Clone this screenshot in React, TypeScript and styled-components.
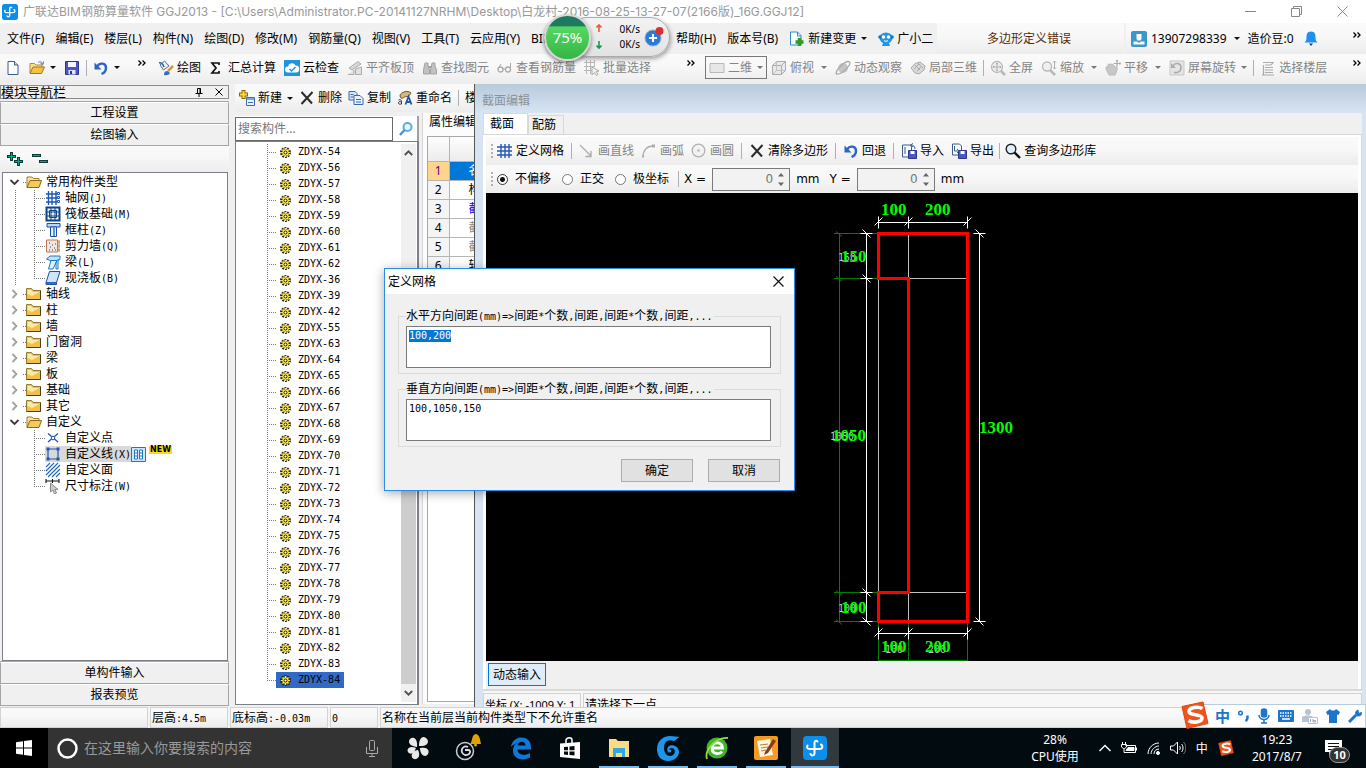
import React, { useEffect, useRef } from "react";
import styled, { createGlobalStyle, css } from "styled-components";

const UI = `"Noto Sans", "Noto Sans CJK SC", sans-serif`;

const GlobalStyle = createGlobalStyle`
  *, *::before, *::after { box-sizing: border-box; }
  body { margin: 0; background: #f0f0f0; font: 12px/16px ${UI}; color: #000; overflow: hidden; }
  button, input, textarea { font: inherit; color: inherit; }
  ul, ol { list-style: none; margin: 0; padding: 0; }
  svg { display: block; flex: none; }
`;

/* ---------- shared parts ---------- */

const Mono = styled.span`
  font: 10px/12px "DejaVu Sans Mono", monospace;
`;

function Sun({ children }: { children: string }) {
  return (
    <>
      {children.split(/([\x20-\x7e]+)/).map((part, i) =>
        /^[\x20-\x7e]+$/.test(part) ? <Mono key={i}>{part}</Mono> : part
      )}
    </>
  );
}

const Caret = styled.span<{ $dim?: boolean; $tight?: boolean }>`
  flex: none;
  margin-left: ${(p) => (p.$tight ? 2 : 4)}px;
  border: 3px solid transparent;
  border-top-color: ${(p) => (p.$dim ? "#777" : "#111")};
  border-bottom-width: 0;
`;

const Rule = styled.span<{ $snug?: boolean }>`
  flex: none;
  width: 1px;
  height: 16px;
  margin: 0 ${(p) => (p.$snug ? -2 : 0)}px;
  background: #b0b0b0;
`;

const More = () => (
  <svg width="8" height="6" viewBox="0 0 8 6" fill="none" stroke="#000" strokeWidth="1.3">
    <path d="M0.5 0.5 3 3 0.5 5.5M4.5 0.5 7 3 4.5 5.5" />
  </svg>
);

/* ---------- icons ---------- */

const S = ({ children, size = 16 }: { children: React.ReactNode; size?: number }) => (
  <svg width={size} height={size} viewBox="0 0 16 16" fill="none">
    {children}
  </svg>
);

const icons: Record<string, React.ReactNode> = {
  file: <S><path d="M3 1.500h6.500L13 5v9.500H3z" fill="#fdfeff" stroke="#3c5a8c" /><path d="M9.500 1.500V5H13" stroke="#3c5a8c" fill="#cfe0f4" /></S>,
  open: <S><path d="M1 13V3.500h4.500L7 5h6v2" fill="#fbe08e" stroke="#b98a22" /><path d="M1 13.500 4 7h11.500L12.500 13.500z" fill="#f3c04a" stroke="#a87714" /><path d="M9 2.500c2-1.500 4-.5 5 1.500M14.500 1.500 14 4.500l-2.500-1" stroke="#4e78b4" /></S>,
  save: <S><path d="M1.500 1.500h13v13h-13z" fill="#4a57c4" stroke="#2c3590" /><path d="M4 2h8v5H4z" fill="#f3f6ff" /><path d="M4.500 10h7v4.500h-7z" fill="#dfe4f5" /><path d="M6 11h2v3H6z" fill="#2c3590" /></S>,
  undo: <S><path d="M1.500 2.500v7h7z" fill="#2f63c5" /><path d="M4 6.500c3-4.500 9-3.500 9 1.500 0 3-2 5-4.500 6" stroke="#2f63c5" strokeWidth="2.400" /></S>,
  paint: <S><path d="M2 5 6.500 1 11 6 5.500 10z" fill="#e9eef5" stroke="#52719c" /><path d="M1 3c2-1 4 1 5 4" stroke="#3c5d91" strokeWidth="1.500" /><path d="M6 15c0-3 1-4 3.500-4L12 13c-1 2-3 2.500-6 2z" fill="#2f6ec4" /><path d="m10 11 5-5" stroke="#d59a22" strokeWidth="2.500" /></S>,
  sigma: <S><path d="M10 5V3H3l4 5-4 5h7v-2" stroke="#111" strokeWidth="1.700" /></S>,
  cloud: <S><path d="M0 0h16v16H0z" fill="#2294de" /><path d="M4 12.500a3 3 0 0 1 0-6 4 4 0 0 1 7.500-1 3.500 3.500 0 0 1 .5 7z" fill="#fff" /><path d="m5.500 9 2 2 4-4" stroke="#2294de" strokeWidth="1.500" /></S>,
  flush: <S><path d="M2 8 11 1.500 14 4 5 10z" fill="#d0d0d0" stroke="#999" /><path d="M1 14.500h6V10M8.500 9v5.500h6V7z" stroke="#999" fill="#ddd" /></S>,
  find: <S><path d="M3 3h3v3l1.500 4v4h-6v-4zM10 3h3v3l1.500 4v4h-6v-4z" fill="#b5b5b5" stroke="#909090" /><path d="M6 7h4" stroke="#909090" strokeWidth="2" /></S>,
  glasses: <S><circle cx="3.500" cy="9.500" r="2.500" stroke="#999" strokeWidth="1.300" /><circle cx="11" cy="9.500" r="2.500" stroke="#999" strokeWidth="1.300" /><path d="M6 9h2.500M1 9l3-5M13.500 9V3" stroke="#999" /></S>,
  batch: <S><path d="M0 2.500h11M0 6.500h11M0 10.500h8M2.500 0v14M6.500 0v14M10.500 0v7" stroke="#aaa" /><path d="m8 7 7 4-3 .5 2 3-1.500 1-2-3L8 15z" fill="#f4f4f4" stroke="#999" /></S>,
  flat: <S><path d="M1 3.500h14v9H1z" fill="#e4e4e4" stroke="#aaa" /></S>,
  cube: <S><path d="M1.500 5.500h9v9h-9zM1.500 5.500l4-4h9v9l-4 4M10.500 5.500l4-4" fill="#e6e6e6" stroke="#999" /><path d="M5.500 1.500v9h9M5.500 10.500l-4 4" stroke="#b5b5b5" /></S>,
  orbit: <S><circle cx="8" cy="8" r="5" fill="#b9b9b9" /><path d="M1.500 14C-.5 11 11-.5 14.500 2c2 2-7 13-13 12z" stroke="#999" strokeWidth="1.400" /></S>,
  local: <S><path d="M1 8 5 3.500l5-1.500 5 4-1 4-5 4-4-1z" fill="#d2d2d2" stroke="#999" /><path d="m4 9 5-5M7 11l5-5M5 5l5 5M8 3l5 5" stroke="#999" /></S>,
  full: <S><circle cx="7" cy="7" r="5.500" fill="#efefef" stroke="#aaa" strokeWidth="1.300" /><path d="M7 3v8M3 7h8M5.800 4.200 7 3l1.200 1.200M5.800 9.800 7 11l1.200-1.200M4.200 5.800 3 7l1.200 1.200M9.800 5.800 11 7 9.800 8.200" stroke="#999" /><path d="m11 11 4 4" stroke="#aaa" strokeWidth="2.500" /></S>,
  zoom: <S><circle cx="6" cy="6.500" r="4.500" fill="#efefef" stroke="#aaa" strokeWidth="1.300" /><path d="m9 10 5 5" stroke="#aaa" strokeWidth="2.500" /><path d="M13.500 1v8M12 2.500 13.500 1 15 2.500M12 7.500 13.500 9 15 7.500" stroke="#999" /></S>,
  pan: <S><path d="M1 9c0-3 1-3 2-1V5c0-1.500 1.500-1.500 2 0 0-1.500 1.800-1.500 2 0 .5-1 2-.5 2 1l1 1c2 0 3 1 2 3l-2 5H4z" fill="#bcbcbc" stroke="#aaa" /><path d="M12 0v7M8.500 3.500h7M11 1l1-1 1 1M14.500 2.500l1 1-1 1" stroke="#999" strokeWidth="1.200" /></S>,
  rotate: <S><path d="M1 1h14v14H1z" fill="#e2e2e2" stroke="#bbb" /><path d="M4 6c2-4 8-3 8 1.500S8 13 5 12.500" stroke="#999" strokeWidth="1.600" /><path d="M2 3v5h5z" fill="#999" /></S>,
  floors: <S><path d="M3 2.500h10L11 5H5M3.500 5v9.500M5 7.500h8M5 10h8M5 12.500h8M2 15h12" stroke="#999" strokeWidth="1.200" /></S>,
  addDoc: <S><path d="M1.500 1h7L12 4.500V14H1.500z" fill="#fff" stroke="#2d88d0" /><path d="M8.500 1v4H12" stroke="#2d88d0" /><path d="M10.500 7v8M6.500 11h8" stroke="#2f9a2a" strokeWidth="3.500" /></S>,
  robot: <S><ellipse cx="8" cy="7" rx="6.500" ry="5.500" fill="#2196e3" /><circle cx="2" cy="6" r="1.800" fill="#1378c4" /><circle cx="14" cy="6" r="1.800" fill="#1378c4" /><circle cx="5.500" cy="6" r="1.800" fill="#fff" /><circle cx="10.500" cy="6" r="1.800" fill="#fff" /><path d="M6 9.500c1 1 3 1 4 0" stroke="#fff" /><path d="M5 12h6l1 3H4z" fill="#2196e3" /></S>,
  user: <S><rect width="16" height="16" rx="2" fill="#3a97c9" /><path d="M5.500 3h5v5l-1 1.500h-3L5.500 8z" fill="#fff" /><path d="M2.500 10.500H6l2 1.500 2-1.500h3.500v3h-11z" fill="#fff" /></S>,
  bell: <S><path d="M8 .5c4 0 4.500 3 4.500 6s1 4 2 5h-13c1-1 2-2 2-5S4 .5 8 .5z" fill="#1f8ff0" /><path d="M6 12.500h4L8 15z" fill="#123a78" /></S>,
  add: <S><path d="M4.500 0v9M0 4.500h9" stroke="#8a6a00" strokeWidth="4" /><path d="M4.500 1v7M1 4.500h7" stroke="#ffd93b" strokeWidth="2" /><path d="M7.500 7.500h8v8h-8z" fill="#eaf3ff" stroke="#3b6bb5" /><path d="M8 8h7v2H8z" fill="#7ba6e0" /><path d="M9 12.500h5" stroke="#3b6bb5" /></S>,
  cross: <S><path d="M2.500 2 13 13.500M13.500 2 2.500 14" stroke="#2b2b2b" strokeWidth="2" /></S>,
  copy: <S><path d="M1 1.500h6l2 2V10H1z" fill="#d9e7fa" stroke="#3767b1" /><path d="M6 5.500h6l3 3V14.500H6z" fill="#eaf2fd" stroke="#3767b1" /><path d="M8 9.500h5M8 12h5M2.500 4.500h3M2.500 7h3" stroke="#3767b1" /></S>,
  rename: <S><path d="M3 6c0-4 8-6 11-3l-3 4C8 5 7 9 4 8z" fill="#d8b777" stroke="#6a5631" /><path d="M1.500 10c2-1 3 0 3 1.500V14c-2 .5-3.500 0-3-1.500s2-1 3-.500" stroke="#333" /><path d="m8.500 14.500 3-8 3 8M9.500 12h4" stroke="#1d56b3" strokeWidth="1.800" /></S>,
  search: <S><circle cx="9.500" cy="6" r="4" fill="#eaf6ff" stroke="#58aee8" strokeWidth="2" /><path d="m6.500 9-4.500 5" stroke="#3f97d8" strokeWidth="2.500" /></S>,
  grid: <S><path d="M0 4h15M0 8h15M0 12h15M4 1v14M8 1v14M12 1v14" stroke="#2857b5" strokeWidth="1.400" /></S>,
  line: <S><path d="m1 2 11 11M12 8v5.500H6.500" stroke="#999" strokeWidth="1.300" /></S>,
  arc: <S><path d="M2 14C2 7 6 3 12 3" stroke="#999" strokeWidth="1.300" /><path d="M11 1.500h3v3h-3zM1 12.500h2v2H1z" fill="#999" /></S>,
  circle: <S><circle cx="7.500" cy="7.500" r="6.300" stroke="#a0a0a0" strokeWidth="1.300" fill="#f2f2f2" /><path d="M6.500 6.500h2v2h-2z" fill="#999" /></S>,
  importer: <S><path d="M1.500 2h8l1 2v10h-9z" fill="#f5f8fd" stroke="#3c5a8c" /><path d="M7.500 7.500h8v8h-8z" fill="#4a57c4" stroke="#2c3590" /><path d="M9.500 8h4v3h-4z" fill="#fff" /><path d="M14 6c0-3-2-4-4-4M12 .5 9.500 2 12 4" stroke="#3c5a8c" /><path d="M4 4v7" stroke="#3c5a8c" /></S>,
  exporter: <S><path d="M1.500 1h7l2 2v9h-9z" fill="#f5f8fd" stroke="#3c5a8c" /><path d="M7.500 7.500h8v8h-8z" fill="#4a57c4" stroke="#2c3590" /><path d="M9.500 8h4v3h-4z" fill="#fff" /><path d="M3.500 3v5h4M6 6l2 2-2 2" stroke="#3c5a8c" /></S>,
  lens: <S><circle cx="6" cy="6" r="4.800" fill="#dcf1fb" stroke="#222" strokeWidth="1.400" /><path d="m9.500 9.500 5.500 5.500" stroke="#111" strokeWidth="2.400" /></S>,
  folderOpen: <S><path d="M1 13V3h5l1.500 1.500H13V7" fill="#fbe39a" stroke="#a57c26" /><path d="M1 13.500 4 6.500h11.500L13 13.500z" fill="#f7c95a" stroke="#8a6a1a" /></S>,
  folder: <S><path d="M.5 13.500V2.500h5l1.500 2h7.500v9z" fill="#f0c04a" stroke="#9a7a34" /><path d="M1.500 8V4h3.500l2 2h6.500L6 10z" fill="#fde9a8" /><path d="M.5 13.500h14v-9" stroke="#4f3f16" /></S>,
  axis: <S><path d="M1 4h11M1 8h11M1 12h11M3.500 1v14M7 1v14M11 1v14" stroke="#1f57b8" strokeWidth="1.400" /><path d="M12.500 2.500h2v2h-2zM12.500 6.500h2v2h-2zM12.500 10.500h2v2h-2z" stroke="#1f57b8" /></S>,
  raft: <S><path d="M1.500 1.500h13v13h-13z" fill="#eaf3ff" stroke="#0f4486" strokeWidth="2" /><path d="M4.500 4.500h7v7h-7zM2 6h12M2 10h12M6 2v12M10 2v12" stroke="#0f4486" /></S>,
  column: <S><path d="M2 1.500h13V5H2z" fill="#b9d6fb" stroke="#1c4fa8" /><path d="M5.500 5h6v9.500h-6z" fill="#e8f2ff" stroke="#1c4fa8" /><path d="M9 5v9" stroke="#5c95e5" strokeWidth="2" /></S>,
  wall: <S><path d="M1.500 2h11v12h-11z" fill="#eee9e6" stroke="#c2744c" /><path d="M4 5h1M7 7h1M5 9h1M9 10h1M4 12h1M7 12h1M10 6h1M10 12h1" stroke="#444" /><path d="M14 2v12M12 4h3M12 8h3M12 12h3" stroke="#d47a38" /></S>,
  beam: <S><path d="M1.500 5 5 2h10v3.500L9 8z" fill="#bfe3fb" stroke="#1c78c4" /><path d="M6 6.500h6L8 15H3.500zM11 8v7h2V5" fill="#dff1fd" stroke="#1c78c4" /></S>,
  slab: <S><path d="M4.500 1.500h10.500l-3.500 11H1z" fill="#cfe3fb" stroke="#1c4fa8" /><path d="M1 12.500v2h10.500v-2" fill="#3474d4" stroke="#1c4fa8" /></S>,
  pt: <S><path d="M3 3.500 13 12M13 3.500 3 12" stroke="#1f57b8" strokeWidth="1.300" /><circle cx="8" cy="8" r="1.800" fill="#fff" stroke="#1f57b8" /></S>,
  poly: <S><path d="M3 3h10v10H3z" stroke="#1f57b8" strokeWidth="1.200" /><path d="M1.500 1.500h3v3h-3zM11.500 1.500h3v3h-3zM1.500 11.500h3v3h-3zM11.500 11.500h3v3h-3z" fill="#1f57b8" /></S>,
  hatch: <S><path d="M1 5l4-4M1 9l8-8M1 13l12-12M3 15 15 3M7 15l8-8M11 15l4-4" stroke="#1f68c8" strokeWidth="1.100" /></S>,
  dim: <S><path d="M1 1v4M14 1v4M7.500 1v4M1 3h13" stroke="#111" strokeWidth="1.100" /><path d="M5.500 5v9l2.500-2 1.500 4 2-1-1.500-3.500h3z" fill="#ccc" stroke="#888" /></S>,
};

const gear = (
  <svg width="11" height="11" viewBox="0 0 11 11">
    <circle cx="5.500" cy="5.500" r="4.500" fill="none" stroke="#222" strokeWidth="2" strokeDasharray="1.800 1" />
    <circle cx="5.500" cy="5.500" r="3.500" fill="#ffee22" stroke="#111" strokeWidth=".5" />
    <path d="M5.500 1v9M1 5.500h9M2.500 2.500l6 6M8.500 2.500l-6 6" stroke="#ffee22" strokeWidth="1.200" />
    <circle cx="5.500" cy="5.500" r="1.500" fill="#fff" stroke="#111" />
  </svg>
);

const BrandMark = ({ size }: { size: number }) => (
  <svg width={size} height={size} viewBox="0 0 24 24" fill="none">
    <rect width="24" height="24" rx="4" fill="#0d8ee9" />
    <path d="M14.500 5.500c-1.500-1.500-3-.5-3 1.500v10c0 3-3 3-4 1M4.500 9.500c-1 2 0 3.500 2 3.500h10c3.500 0 3.500-3.500 1.500-4.500" stroke="#fff" strokeWidth="2" strokeLinecap="round" />
  </svg>
);

const SogouMark = ({ size }: { size: number }) => (
  <svg width={size} height={size} viewBox="0 0 28 28" fill="none">
    <path d="M1 5.500 22 1l5 21.500L6 27.500z" fill="#f0531c" stroke="#e2450f" strokeLinejoin="round" />
    <path d="M21.500 7.500C17 5 8 6.500 8 10.500c0 4.500 13 2 13 6.500 0 4-9 5.500-13.500 2.500" stroke="#fff" strokeWidth="3.600" />
  </svg>
);

/* ---------- title and menu ---------- */

const Shell = styled.div`
  position: relative;
  display: flex;
  flex-direction: column;
  height: 100vh;
  min-height: 600px;
`;

const TitleBar = styled.header`
  display: flex;
  align-items: center;
  height: 23px;
  padding: 0 18px 0 2px;
  background: #fff;
  color: #999;
`;

const TitleText = styled.h1`
  margin: 0 auto 0 5px;
  font: 12px/16px Inter, "Noto Sans CJK SC", sans-serif;
  white-space: nowrap;
`;

const WinButtons = styled.div`
  display: flex;
  gap: 35px;
`;

const BareButton = styled.button`
  display: flex;
  padding: 0;
  border: 0;
  background: none;
`;

const MenuBar = styled.nav`
  display: flex;
  height: 31px;
`;

const MenuList = styled.ul`
  display: flex;
  flex: none;
  align-items: center;
  gap: 11px;
  width: 937px;
  padding-left: 7px;
  white-space: nowrap;
`;

const MenuItem = styled.li<{ $wide?: boolean }>`
  display: flex;
  align-items: center;
  gap: 3px;
  ${(p) => p.$wide && css`width: 134px;`}
`;

const MenuButton = styled.button`
  padding: 0;
  border: 0;
  background: none;
  white-space: nowrap;
`;

const barFill = css`
  background: linear-gradient(#fafafa, #f8f8f8 40%, #ececec);
`;

const Notice = styled.div`
  ${barFill}
  flex: none;
  display: flex;
  align-items: center;
  width: 187px;
  padding-left: 50px;
  color: #5a2a00;
`;

const Account = styled.div`
  ${barFill}
  display: flex;
  flex: 1;
  align-items: center;
  margin-left: 2px;
  padding: 0 5px;
  white-space: nowrap;
  & > svg:last-child { margin: 0 0 8px auto; }
`;

const Phone = styled.span`
  margin: 0 3px 0 4px;
`;

const Beans = styled.span`
  margin: 0 9px 0 8px;
`;

/* ---------- toolbar ---------- */

const ToolRow = styled.div`
  display: flex;
  height: 30px;
  gap: 2px;
  ${barFill}
`;

const ToolGroup = styled.div<{ $w?: number; $pad?: number }>`
  display: flex;
  align-items: center;
  gap: 8px;
  flex: ${(p) => (p.$w ? "none" : "1")};
  ${(p) => p.$w && css`width: ${p.$w}px;`}
  padding: 0 5px 3px ${(p) => p.$pad ?? 5}px;
`;

const MoreMark = styled.span`
  margin: 0 0 10px auto;
`;

const ToolButton = styled.button<{ $dim?: boolean; $boxed?: boolean }>`
  display: flex;
  flex: none;
  align-items: center;
  gap: 3px;
  padding: 0;
  border: 0;
  background: none;
  color: ${(p) => (p.$dim ? "#848484" : "#000")};
  white-space: nowrap;
  & > svg { opacity: ${(p) => (p.$dim ? 0.8 : 1)}; }
  ${(p) => p.$boxed && css`
    height: 23px;
    margin-right: -4px;
    padding: 0 3px;
    border: 1px solid #777;
  `}
`;

type ToolProps = { icon: string; label?: string; dim?: boolean; caret?: boolean; tight?: boolean; boxed?: boolean };
const Tool = ({ icon, label, dim, caret, tight, boxed }: ToolProps) => (
  <ToolButton $dim={dim} $boxed={boxed} aria-label={label ?? icon}>
    {icons[icon]}
    {label}
    {caret && <Caret $dim={dim} $tight={tight || boxed} />}
  </ToolButton>
);

/* ---------- speed ball ---------- */

const Speed = styled.aside`
  position: absolute;
  left: 544px;
  top: 14px;
  display: flex;
  align-items: center;
  height: 46px;
  font: 10px/15px ${UI};
`;

const Ball = styled.div`
  position: relative;
  z-index: 1;
  display: grid;
  place-items: center;
  width: 47px;
  height: 47px;
  border: 2px solid #d6d6d6;
  border-radius: 50%;
  background: linear-gradient(#1d7a60 0 22%, #54d862 26%, #35b544);
  box-shadow: 0 2px 4px rgba(0, 0, 0, 0.5);
  color: #fff;
  font-size: 15px;
`;

const Pill = styled.div`
  display: flex;
  align-items: center;
  width: 103px;
  height: 40px;
  margin-left: -24px;
  padding: 0 5px 0 28px;
  border: 1px solid #aaa;
  border-radius: 20px;
  background: linear-gradient(#f3f3f3, #e2e2e2);
  box-shadow: 1px 2px 4px rgba(0, 0, 0, 0.35);
`;

const Rates = styled.div`
  margin-left: auto;
  margin-right: 4px;
  white-space: nowrap;
`;

/* ---------- workspace ---------- */

const Workspace = styled.main`
  display: flex;
  flex: 1;
  min-height: 0;
`;

const NavPanel = styled.section`
  display: flex;
  flex: none;
  flex-direction: column;
  width: 229px;
  padding: 1px 0;
`;

const NavHeader = styled.div`
  display: flex;
  align-items: center;
  gap: 12px;
  height: 14px;
  margin-bottom: 3px;
  padding-right: 5px;
  border: 1px solid #8a8a8a;
  font-size: 13px;
  line-height: 12px;
  & > span { margin-right: auto; }
`;

const NavButton = styled.button`
  height: 22px;
  padding: 0;
  border: 1px solid #a5a5a5;
  border-top-color: #fff;
  background: #f0f0f0;
  box-shadow: 0 -1px #a5a5a5;
`;

const NavTools = styled.div`
  display: flex;
  align-items: center;
  gap: 8px;
  height: 26px;
  padding-left: 7px;
  ${barFill}
`;

const TreeBox = styled.div`
  flex: 1;
  min-height: 0;
  margin: 0 1px 1px 2px;
  padding-top: 1px;
  border: 1px solid #7d7f88;
  background: #fff;
`;

const TreeRow = styled.li<{ $child?: boolean }>`
  display: flex;
  align-items: center;
  height: 16px;
  padding-left: ${(p) => (p.$child ? 12 : 6)}px;
  white-space: nowrap;
  line-height: 16px;
`;

const Guide = styled.span<{ $w: number; $rail?: "full" | "half" | "none"; $arm?: boolean }>`
  flex: none;
  width: ${(p) => p.$w}px;
  height: 16px;
  background-image:
    repeating-linear-gradient(#777 0 1px, transparent 1px 2px),
    repeating-linear-gradient(90deg, #777 0 1px, transparent 1px 2px);
  background-repeat: no-repeat;
  background-position: 0 0, 0 8px;
  background-size:
    1px ${(p) => (p.$rail === "none" ? "0" : p.$rail === "half" ? "8px" : "100%")},
    ${(p) => (p.$arm ? "100%" : "0")} 1px;
`;

const RowLabel = styled.span<{ $on?: boolean }>`
  display: flex;
  align-items: center;
  gap: 4px;
  height: 16px;
  background: ${(p) => (p.$on ? "#d9d9d9" : "none")};
`;

const NewTag = styled.span`
  align-self: flex-start;
  margin-left: 3px;
  padding: 0 1px;
  background: #ffd91a;
  font: bold 8px/8px "DejaVu Sans", sans-serif;
`;

const Toggle = ({ open }: { open?: boolean }) => (
  <svg width="11" height="10" viewBox="0 0 11 10" fill="none" strokeWidth="1.800">
    {open ? <path d="M1.500 3 5.500 7l4-4" stroke="#3c3c3c" /> : <path d="m3.500 1 4 4-4 4" stroke="#a0a0a0" />}
  </svg>
);

type Node = { name: string; open?: boolean; rail?: boolean; kids?: [string, string][] };
const tree: Node[] = [
  {
    name: "常用构件类型", open: true, rail: true,
    kids: [["axis", "轴网(J)"], ["raft", "筏板基础(M)"], ["column", "框柱(Z)"], ["wall", "剪力墙(Q)"], ["beam", "梁(L)"], ["slab", "现浇板(B)"]],
  },
  ...["轴线", "柱", "墙", "门窗洞", "梁", "板", "基础", "其它"].map((name) => ({ name })),
  {
    name: "自定义", open: true,
    kids: [["pt", "自定义点"], ["poly", "自定义线(X)"], ["hatch", "自定义面"], ["dim", "尺寸标注(W)"]],
  },
];

const ListPanel = styled.section`
  display: flex;
  flex: none;
  flex-direction: column;
  width: 246px;
  padding-left: 6px;
  overflow: hidden;
  border-right: 1px solid #555;
`;

const ListTools = styled.div`
  display: flex;
  align-items: center;
  gap: 6px;
  height: 28px;
  padding-left: 4px;
  ${barFill}
`;

const ListBody = styled.div`
  display: flex;
  flex: 1;
  min-height: 0;
`;

const Finder = styled.div`
  display: flex;
  flex: none;
  flex-direction: column;
  width: 184px;
  padding: 4px 0 2px;
`;

const SearchRow = styled.div`
  display: flex;
  align-items: center;
  gap: 5px;
  height: 25px;
  border-right: 2px solid #a0a0a0;
  background: #fff;
`;

const SearchInput = styled.input`
  width: 158px;
  height: 24px;
  padding: 0 2px;
  border: 1px solid #6a6a6a;
  background: #fff;
  &::placeholder { color: #777; opacity: 1; }
`;

const ItemBox = styled.div`
  display: flex;
  flex: 1;
  min-height: 0;
  padding: 2px 1px 2px 0;
  border: 1px solid #7d7f88;
  border-right-width: 2px;
  background: #fff;
`;

const ItemList = styled.ul`
  flex: 1;
  padding-left: 31px;
`;

const ItemRow = styled.li`
  display: flex;
  height: 16px;
`;

const ItemLabel = styled.span<{ $on?: boolean }>`
  display: flex;
  align-items: center;
  gap: 7px;
  padding: 0 4px;
  background: ${(p) => (p.$on ? "#316ac5" : "none")};
`;

const ScrollTrack = styled.div`
  display: flex;
  flex-direction: column;
  align-items: center;
  width: 15px;
  padding: 6px 0;
  background: #f0f0f0;
`;

const ScrollThumb = styled.div`
  width: 15px;
  height: 276px;
  margin: auto 0 6px;
  background: #cdcdcd;
`;

const Props = styled.div`
  flex: 1;
  min-width: 0;
  margin: 1px 0 3px 3px;
  padding: 0 0 2px 4px;
  border-left: 1px solid #d5d5d5;
  background: #fcfcfc;
  overflow: hidden;
  white-space: nowrap;
`;

const PropsTitle = styled.div`
  height: 23px;
  padding: 1px 2px;
`;

const PropsBox = styled.div`
  height: calc(100% - 23px);
  border: 1px solid #a8a8a8;
  border-right: 0;
  background: #fff;
  overflow: hidden;
`;

const PropsTable = styled.table`
  border-collapse: collapse;
  table-layout: fixed;
  width: 80px;
  th, td {
    height: 19px;
    padding: 0;
    border-right: 1px solid #b5b5b5;
    border-bottom: 1px solid #b5b5b5;
    font: 12px/16px ${UI};
  }
  th { background: #f4f4f4; text-align: center; }
  td { padding-left: 19px; background: #fff; }
  thead th { height: 24px; background: linear-gradient(#fdfdfd, #ececec); }
  tbody tr:first-child th { background: #ffd48c; color: #6a0060; }
  tbody tr:first-child td { background: #0078d7; }
`;

const NumberCol = styled.col`
  width: 21px;
`;

const PropCell = styled.td<{ $ink: string }>`
  color: ${(p) => p.$ink};
`;

/* ---------- section editor ---------- */

const Editor = styled.section`
  display: flex;
  flex: 1;
  flex-direction: column;
  min-width: 0;
  padding: 0 4px 0 8px;
  background: #d7e4f2;
  overflow: hidden;
`;

const EditorTitle = styled.h2`
  flex: none;
  height: 29px;
  margin: 0 -4px 0 -8px;
  padding: 9px 7px 0;
  background: linear-gradient(#b9cadb, #d7e4f2);
  color: #8d9197;
  font: 12px/16px ${UI};
`;

const Tabs = styled.div`
  display: flex;
  flex: none;
  align-items: flex-end;
  height: 21px;
  background: #f0f0f0;
`;

const Tab = styled.button<{ $on?: boolean }>`
  height: ${(p) => (p.$on ? 21 : 19)}px;
  padding: 0 ${(p) => (p.$on ? 13 : 7)}px 0 ${(p) => (p.$on ? 6 : 3)}px;
  border: 1px solid #d9d9d9;
  border-bottom: 0;
  background: ${(p) => (p.$on ? "#fff" : "#f0f0f0")};
`;

const EditorPage = styled.div`
  display: flex;
  flex: 1;
  flex-direction: column;
  min-height: 0;
  padding: 2px 3px 0 3px;
  border: solid #d9d9d9;
  border-width: 1px 1px 2px 0;
  background: #fff;
`;

const EditTools = styled.div`
  display: flex;
  flex: none;
  align-items: center;
  gap: 7px;
  height: 28px;
  padding-left: 5px;
  ${barFill}
  white-space: nowrap;
`;

const Grip = styled.span`
  width: 2px;
  height: 14px;
  margin-right: -3px;
  background: repeating-linear-gradient(#b0b0b0 0 2px, transparent 2px 4px);
`;

const RadioLabel = styled.label`
  display: flex;
  align-items: center;
  gap: 7px;
  margin-right: 4px;
`;

const Radio = styled.input`
  appearance: none;
  width: 11px;
  height: 11px;
  margin: 0;
  border: 1px solid #777;
  border-radius: 50%;
  background: #fff;
  &:checked { background: radial-gradient(#111 0 2px, #fff 3px); border-color: #333; }
`;

const Field = styled.label`
  display: flex;
  align-items: center;
  gap: 6px;
  margin-right: 3px;
  font-family: "DejaVu Sans", sans-serif;
`;

const Spin = styled.span`
  display: flex;
  align-items: center;
  width: 78px;
  height: 23px;
  border: 1px solid #7a7a7a;
  background: #f2f2f2;
`;

const SpinInput = styled.input`
  width: 60px;
  padding: 0;
  border: 0;
  background: none;
  color: #777;
  text-align: right;
`;

const SpinArrows = () => (
  <svg width="16" height="19" viewBox="0 0 16 19" fill="#666">
    <path d="M5 6.500 8 3l3 3.500zM5 12.500 8 16l3-3.500z" />
  </svg>
);

const CanvasPane = styled.div`
  flex: 1;
  min-height: 0;
  background: #000;
  overflow: hidden;
`;

const EditorFoot = styled.div`
  flex: none;
  height: 28px;
  padding: 2px;
  background: #f0f0f0;
`;

const DynButton = styled.button`
  height: 23px;
  padding: 0 4px;
  border: 1px solid #0078d7;
  background: #e0ecf7;
`;

const EditorStatus = styled.div`
  display: flex;
  flex: none;
  gap: 2px;
  height: 16px;
  padding-top: 2px;
  background: #f7f7f7;
  overflow: hidden;
  white-space: nowrap;
  & > span {
    flex: none;
    width: 98px;
    padding: 3px 1px;
    border: 1px solid #d2d2d2;
    border-bottom: 0;
    font-size: 11px;
    overflow: hidden;
  }
  & > span:last-child { flex: 1; font-size: 12px; }
`;

const DimText = styled.text`
  fill: #00ff00;
  font: bold 17px "Liberation Serif", serif;
`;

const GhostText = styled.text`
  fill: #c8c8c8;
  font: 10px "DejaVu Sans Mono", monospace;
`;

function Drawing() {
  const tickV = (x: number, y: number) => `M${x - 6} ${y}h12M${x - 4} ${y - 4}l8 8`;
  const tickH = (x: number, y: number) => `M${x} ${y - 6}v12M${x + 4} ${y - 5}l-8 8`;
  return (
    <svg width="872" height="468" viewBox="486 193 872 468" fill="none" role="img" aria-label="截面">
      <g shapeRendering="crispEdges">
        <path d="M878.500 278V592M908.500 234V278M908.500 592V622M908 278.500H967M908 592.500H967" stroke="#c0c0c0" />
        <path d="M839.500 233V622M834 233.500H878M834 278.500H878M834 592.500H878M834 621.500H878M878.500 622V660.500M908.500 622V660M967.500 622V660M878 660.500H968" stroke="#008000" />
        <path d="M866.500 233V622M979.500 233V622M878 222.500H968M878 633.500H968" stroke="#fff" />
        <path d="M878.500 233.500H967.500V621.500H878.500V592.500H908.500V278.500H878.500Z" stroke="#f00" strokeWidth="3" />
      </g>
      <path d={[233.5, 278.5, 592.5, 621.5].map((y) => tickV(866.5, y)).join("") + tickV(979.5, 233.5) + tickV(979.5, 621.5)} stroke="#fff" />
      <path d={[878.5, 908.5, 967.5].map((x) => tickH(x, 222.5) + tickH(x, 633.5)).join("")} stroke="#fff" />
      <path d={[233.5, 278.5, 592.5, 621.5].map((y) => `M836 ${y - 2}l6 5`).join("")} stroke="#008000" />
      <GhostText x="838" y="261">150</GhostText>
      <GhostText x="830" y="440">1050</GhostText>
      <GhostText x="838" y="612">100</GhostText>
      <GhostText x="885" y="653">100</GhostText>
      <GhostText x="928" y="653">200</GhostText>
      <DimText x="881" y="215">100</DimText>
      <DimText x="925" y="215">200</DimText>
      <DimText x="841" y="262">150</DimText>
      <DimText x="832" y="441">1050</DimText>
      <DimText x="841" y="613">100</DimText>
      <DimText x="881" y="652">100</DimText>
      <DimText x="925" y="652">200</DimText>
      <DimText x="979" y="433">1300</DimText>
    </svg>
  );
}

/* ---------- dialog ---------- */

const Dialog = styled.div`
  position: absolute;
  left: 384px;
  top: 268px;
  width: 411px;
  border: 1px solid #2a8de8;
  background: #f0f0f0;
  box-shadow: 0 2px 10px rgba(0, 0, 0, 0.35);
`;

const DialogTitle = styled.div`
  display: flex;
  align-items: center;
  justify-content: space-between;
  height: 25px;
  padding: 0 10px 0 3px;
  background: #fff;
`;

const DialogForm = styled.form`
  padding: 16px 13px 8px;
`;

const Group = styled.fieldset`
  min-width: 0;
  height: 64px;
  margin: 0 0 9px;
  padding: 3px 9px 0 7px;
  border: 1px solid #dcdcdc;
  legend { padding: 0 2px 0 0; line-height: 12px; white-space: nowrap; }
`;

const Area = styled.textarea`
  display: block;
  width: 100%;
  height: 42px;
  padding: 3px 2px;
  border: 1px solid #7a7a7a;
  outline: 0;
  background: #fff;
  resize: none;
  font: 10px/12px "DejaVu Sans Mono", monospace;
  &::selection { background: #0078d7; color: #fff; }
`;

const Actions = styled.div`
  display: flex;
  justify-content: flex-end;
  gap: 15px;
  padding: 3px 1px 0 0;
`;

const DialogButton = styled.button`
  width: 72px;
  height: 23px;
  padding: 0;
  border: 1px solid #adadad;
  background: #e1e1e1;
`;

/* ---------- status, IME, taskbar ---------- */

const StatusBar = styled.footer`
  display: flex;
  flex: none;
  gap: 2px;
  height: 21px;
  background: #f4f4f4;
`;

const StatusCell = styled.span<{ $w?: number }>`
  flex: ${(p) => (p.$w ? "none" : "1")};
  ${(p) => p.$w && css`width: ${p.$w}px;`}
  padding: 2px 1px;
  border: 1px solid #d2d2d2;
  ${barFill}
  white-space: nowrap;
`;

const ImeBar = styled.aside`
  position: absolute;
  right: 0;
  bottom: 40px;
  display: flex;
  align-items: center;
  gap: 8px;
  width: 172px;
  height: 24px;
  padding: 0 2px 0 20px;
  border: 1px solid #b5cbe0;
  background: #fff;
  color: #1c74cc;
  font: bold 15px/20px "Noto Sans CJK SC", sans-serif;
`;

const ImeLogo = styled.span`
  position: absolute;
  left: -14px;
  top: -4px;
`;

const Taskbar = styled.footer`
  display: flex;
  flex: none;
  align-items: stretch;
  height: 40px;
  background: #020b10;
  color: #fff;
`;

const Start = styled.button`
  display: grid;
  place-items: center;
  width: 48px;
  padding: 0;
  border: 0;
  background: #000;
`;

const TaskSearch = styled.label`
  display: flex;
  flex: none;
  align-items: center;
  gap: 5px;
  width: 344px;
  padding: 0 14px 0 8px;
  background: #333;
`;

const TaskInput = styled.input`
  flex: 1;
  min-width: 0;
  padding: 0;
  border: 0;
  background: none;
  font-size: 14px;
  line-height: 20px;
  &::placeholder { color: #999; opacity: 1; }
`;

const Apps = styled.div`
  display: flex;
  gap: 1px;
  margin-left: 2px;
  & > :nth-child(2) { margin-right: 5px; }
`;

const TaskApp = styled.button<{ $open?: boolean; $on?: boolean }>`
  display: grid;
  place-items: center;
  width: 48px;
  padding: 0;
  border: 0;
  background-color: ${(p) => (p.$on ? "#32393d" : "transparent")};
  background-image: ${(p) => (p.$open ? "linear-gradient(#76b9ed, #76b9ed)" : "none")};
  background-repeat: no-repeat;
  background-position: center bottom;
  background-size: ${(p) => (p.$on ? 48 : 40)}px 2px;
`;

const Tray = styled.div`
  display: flex;
  align-items: center;
  gap: 10px;
  margin-left: auto;
  padding-right: 24px;
  text-align: center;
  line-height: 17px;
`;

const Usage = styled.div`
  margin-right: 10px;
`;

const Clock = styled.time`
  margin: 0 13px 0 8px;
`;

const Bell = styled.div`
  position: relative;
`;

const Count = styled.span`
  position: absolute;
  left: 4px;
  top: 7px;
  width: 21px;
  border: 1px solid #999;
  border-radius: 8px;
  background: #333;
  font: bold 11px/14px ${UI};
`;

const taskApps: [string, React.ReactNode, boolean?, boolean?][] = [
  ["风扇", <svg width="24" height="24" viewBox="0 0 24 24" fill="#e8e8e8"><path d="M11 11C5 10 1 7 4 3c3-3 8-1 7 8zM13 10c0-7 3-11 7-8s2 9-7 8zM14 12c7-1 10 2 8 6s-8 2-8-6zM12 14c3 6 0 10-4 9s-3-8 4-9zM10 12c-2 6-6 7-8 4s2-7 8-4z" /></svg>],
  ["提醒", <svg width="28" height="28" viewBox="0 0 28 28" fill="none"><circle cx="12" cy="17" r="8.500" stroke="#ccc" strokeWidth="1.500" /><path d="M15 13c-6-3-9 6-3 8 5 1 7-5 3-5h-3" stroke="#ddd" strokeWidth="1.800" /><path d="M23 0c4 1 4 6 5 10H17c3-3 1-9 6-10z" fill="#e0a400" /><circle cx="22.500" cy="11" r="1.500" fill="#e0a400" /></svg>],
  ["Edge", <svg width="24" height="24" viewBox="0 0 24 24"><path d="M2 11C3 4 8 1.500 12.500 1.500c7 0 10 5 9.500 12H8.500c0 6 8 6.500 12.500 3.500v4.500C12 26 3.500 22 4 14c.2-3.500 2-6 5-7.500C7 7.500 3.500 9 2 11zm6.500-1.500h8c0-5-7.500-5-8 0z" fill="#0e78d8" /></svg>],
  ["商店", <svg width="24" height="24" viewBox="0 0 24 24"><path d="M2 7.500 22 6v17L2 21z" fill="#fff" /><path d="M8 7V4c1-3 6-3 6 0v3" stroke="#fff" strokeWidth="1.500" fill="none" /><path d="M6 11l4-.3v3.500H6zM11.500 10.500l5-.4v4.100h-5zM6 15.500h4v3.500l-4-.4zM11.500 15.500h5v4l-5-.4z" fill="#020b10" /></svg>],
  ["资源管理器", <svg width="24" height="24" viewBox="0 0 24 24"><path d="M2 3h7l2 2h11v16H2z" fill="#f9dc83" /><path d="M6 21v-9h12v9h-3v-4H9v4z" fill="#2fa9e6" /></svg>, true],
  ["G浏览器", <svg width="26" height="26" viewBox="0 0 26 26"><path d="M25 2c-3 1-5 4-6 4-5-2-10 0-10 7 0 5 3 8 6 8 4 0 6-4 4-7-2-2-5-1-5 1 1-1 3 0 2 2-3 2-5-2-3-5 3-4 11-1 11 5 0 5-5 9-11 9C6 26 2 21 2 14 2 5 9 1 15 1c4 0 7 1 10 1z" fill="#1c95ec" /></svg>, true],
  ["360浏览器", <svg width="26" height="26" viewBox="0 0 26 26" fill="none"><circle cx="13" cy="13" r="10.500" fill="#3fb62c" /><path d="M8 13h10.500c0-7-10.500-7-10.500 0s8 6.500 10 3.500" stroke="#fff" strokeWidth="2.800" /><path d="M3 24C0 15 12 2 24 3" stroke="#8edb3f" strokeWidth="1.800" /></svg>, true],
  ["便笺", <svg width="26" height="26" viewBox="0 0 26 26"><rect x="1" y="1" width="24" height="24" rx="2" fill="#f59a22" /><path d="M4 6l13-2 3 16-13 2z" fill="#fff8e6" /><path d="m7 10 8-1M8 13l7-1M8 16l5-1" stroke="#b87d2c" /><path d="m12 17 8-13 3 2-8 12-4 2z" fill="#8c3b12" /></svg>, true],
  ["广联达", <BrandMark size={24} />, true, true],
];

/* ---------- page ---------- */

const menus = ["文件(F)", "编辑(E)", "楼层(L)", "构件(N)", "绘图(D)", "修改(M)", "钢筋量(Q)", "视图(V)", "工具(T)", "云应用(Y)"];
const itemNumbers = [54, 56, 57, 58, 59, 60, 61, 62, 36, 39, 42, 55, ...Array.from({ length: 22 }, (_, i) => 63 + i)];
const propRows: [string, string][] = [["名", "#fff"], ["构", "#000"], ["截", "#00f"], ["截", "#888"], ["截", "#888"], ["轴", "#000"]];

export default function App() {
  const first = useRef<HTMLTextAreaElement>(null);
  useEffect(() => {
    first.current?.focus();
    first.current?.select();
  }, []);

  return (
    <Shell>
      <GlobalStyle />
      <TitleBar>
        <BrandMark size={16} />
        <TitleText>广联达BIM钢筋算量软件 GGJ2013 - [C:\Users\Administrator.PC-20141127NRHM\Desktop\白龙村-2016-08-25-13-27-07(2166版)_16G.GGJ12]</TitleText>
        <WinButtons>
          <BareButton aria-label="最小化"><svg width="11" height="11" viewBox="0 0 11 11" stroke="#888" fill="none"><path d="M0 5.500h11" /></svg></BareButton>
          <BareButton aria-label="还原"><svg width="11" height="11" viewBox="0 0 11 11" stroke="#888" fill="none"><path d="M.5 2.500h8v8h-8zM2.500 2.500v-2h8v8h-2" /></svg></BareButton>
          <BareButton aria-label="关闭"><svg width="11" height="11" viewBox="0 0 11 11" stroke="#888" fill="none"><path d="m.5.5 10 10M10.500.5l-10 10" /></svg></BareButton>
        </WinButtons>
      </TitleBar>

      <MenuBar>
        <MenuList>
          {menus.map((m) => <MenuItem key={m}><MenuButton>{m}</MenuButton></MenuItem>)}
          <MenuItem $wide><MenuButton>BIM</MenuButton></MenuItem>
          <MenuItem><MenuButton>帮助(H)</MenuButton></MenuItem>
          <MenuItem><MenuButton>版本号(B)</MenuButton></MenuItem>
          <MenuItem>{icons.addDoc}<MenuButton>新建变更</MenuButton><Caret $tight /></MenuItem>
          <MenuItem>{icons.robot}<MenuButton>广小二</MenuButton></MenuItem>
        </MenuList>
        <Notice>多边形定义错误</Notice>
        <Account>
          {icons.user}
          <Phone>13907298339</Phone>
          <Caret />
          <Beans>造价豆:0</Beans>
          {icons.bell}
          <More />
        </Account>
      </MenuBar>

      <ToolRow>
        <ToolGroup $w={151}>
          <Tool icon="file" />
          <Tool icon="open" caret tight />
          <Tool icon="save" />
          <Rule $snug />
          <Tool icon="undo" caret tight />
          <MoreMark><More /></MoreMark>
        </ToolGroup>
        <ToolGroup $w={547}>
          <Tool icon="paint" label="绘图" />
          <Tool icon="sigma" label="汇总计算" />
          <Tool icon="cloud" label="云检查" />
          <Tool icon="flush" label="平齐板顶" dim />
          <Tool icon="find" label="查找图元" dim />
          <Tool icon="glasses" label="查看钢筋量" dim />
          <Tool icon="batch" label="批量选择" dim />
          <MoreMark><More /></MoreMark>
        </ToolGroup>
        <ToolGroup $pad={3}>
          <Tool icon="flat" label="二维" dim caret boxed />
          <Tool icon="cube" label="俯视" dim caret />
          <Tool icon="orbit" label="动态观察" dim />
          <Tool icon="local" label="局部三维" dim />
          <Rule $snug />
          <Tool icon="full" label="全屏" dim />
          <Tool icon="zoom" label="缩放" dim caret />
          <Tool icon="pan" label="平移" dim caret />
          <Tool icon="rotate" label="屏幕旋转" dim caret tight />
          <Rule $snug />
          <Tool icon="floors" label="选择楼层" dim />
          <MoreMark><More /></MoreMark>
        </ToolGroup>
      </ToolRow>

      <Workspace>
        <NavPanel>
          <NavHeader>
            <span>模块导航栏</span>
            <svg width="8" height="9" viewBox="0 0 8 9" stroke="#000" fill="none"><path d="M2.500 5V.5h3V5M5 .5V5M.5 5.500h7M4 5.500V9" /></svg>
            <svg width="8" height="8" viewBox="0 0 8 8" stroke="#000" fill="none"><path d="m.5.5 7 7M7.500.5l-7 7" /></svg>
          </NavHeader>
          <NavButton>工程设置</NavButton>
          <NavButton>绘图输入</NavButton>
          <NavTools>
            <svg width="17" height="14" viewBox="0 0 17 14" fill="none" stroke="#0b3b34"><path d="M4.500 0v9M0 4.500h9M11.500 5v9M7 9.500h9" strokeWidth="3" /><path d="M4.500 1v7M1 4.500h7M11.500 6v7M8 9.500h7" stroke="#18a090" /></svg>
            <svg width="16" height="12" viewBox="0 0 16 12" fill="none" stroke="#0b3b34" strokeWidth="3"><path d="M0 2.500h9M7 8.500h9" /><path d="M1 2.500h7M8 8.500h7" stroke="#18a090" strokeWidth="1" /></svg>
          </NavTools>
          <TreeBox>
            <ul>
              {tree.map((n) => (
                <React.Fragment key={n.name}>
                  <TreeRow>
                    <Toggle open={n.open} />
                    <Guide $w={3} $rail="none" />
                    <Guide $w={3} $rail="none" $arm />
                    <RowLabel>{n.open ? icons.folderOpen : icons.folder}<span>{n.name}</span></RowLabel>
                  </TreeRow>
                  {n.kids?.map(([icon, label], i) => (
                    <TreeRow key={label} $child>
                      <Guide $w={19} $rail={n.rail ? "full" : "none"} />
                      <Guide $w={11} $arm $rail={i === n.kids!.length - 1 ? "half" : "full"} />
                      <RowLabel $on={icon === "poly"}>{icons[icon]}<span><Sun>{label}</Sun></span></RowLabel>
                      {icon === "poly" && (
                        <>
                          <svg width="15" height="15" viewBox="0 0 15 15" fill="#fff" stroke="#1c78c4"><path d="M.5.5h14v14H.5z" fill="#cfe6fb" /><path d="M3.500 3h3v9h-3zM8.500 3h3v9h-3zM3.500 6h3M8.500 6h3M3.500 9h3M8.500 9h3" /></svg>
                          <NewTag>NEW</NewTag>
                        </>
                      )}
                    </TreeRow>
                  ))}
                </React.Fragment>
              ))}
            </ul>
          </TreeBox>
          <NavButton>单构件输入</NavButton>
          <NavButton>报表预览</NavButton>
        </NavPanel>

        <ListPanel>
          <ListTools>
            <Tool icon="add" label="新建" caret tight />
            <Tool icon="cross" label="删除" />
            <Tool icon="copy" label="复制" />
            <Tool icon="rename" label="重命名" />
            <Rule />
            <span>楼</span>
          </ListTools>
          <ListBody>
            <Finder>
              <SearchRow>
                <SearchInput aria-label="搜索构件" placeholder="搜索构件..." />
                {icons.search}
              </SearchRow>
              <ItemBox>
                <ItemList>
                  {itemNumbers.map((n, i) => (
                    <ItemRow key={n}>
                      <Guide $w={9} $arm $rail={i === itemNumbers.length - 1 ? "half" : "full"} />
                      <ItemLabel $on={n === 84}>{gear}<Mono>ZDYX-{n}</Mono></ItemLabel>
                    </ItemRow>
                  ))}
                </ItemList>
                <ScrollTrack>
                  <svg width="9" height="6" viewBox="0 0 9 6" fill="none" stroke="#505050" strokeWidth="1.800"><path d="M.8 5 4.500 1.300 8.200 5" /></svg>
                  <ScrollThumb />
                  <svg width="9" height="6" viewBox="0 0 9 6" fill="none" stroke="#505050" strokeWidth="1.800"><path d="M.8 1 4.500 4.700 8.200 1" /></svg>
                </ScrollTrack>
              </ItemBox>
            </Finder>
            <Props>
              <PropsTitle>属性编辑</PropsTitle>
              <PropsBox>
                <PropsTable>
                  <colgroup><NumberCol /><col /></colgroup>
                  <thead><tr><th /><th /></tr></thead>
                  <tbody>
                    {propRows.map(([t, ink], i) => (
                      <tr key={i}><th scope="row">{i + 1}</th><PropCell $ink={ink}>{t}</PropCell></tr>
                    ))}
                  </tbody>
                </PropsTable>
              </PropsBox>
            </Props>
          </ListBody>
        </ListPanel>

        <Editor>
          <EditorTitle>截面编辑</EditorTitle>
          <Tabs>
            <Tab $on>截面</Tab>
            <Tab>配筋</Tab>
          </Tabs>
          <EditorPage>
            <EditTools>
              <Grip />
              <Tool icon="grid" label="定义网格" />
              <Rule />
              <Tool icon="line" label="画直线" dim />
              <Tool icon="arc" label="画弧" dim />
              <Tool icon="circle" label="画圆" dim />
              <Rule />
              <Tool icon="cross" label="清除多边形" />
              <Rule />
              <Tool icon="undo" label="回退" />
              <Rule />
              <Tool icon="importer" label="导入" />
              <Tool icon="exporter" label="导出" />
              <Rule $snug />
              <Tool icon="lens" label="查询多边形库" />
            </EditTools>
            <EditTools>
              <Grip />
              <RadioLabel><Radio type="radio" name="offset" defaultChecked />不偏移</RadioLabel>
              <RadioLabel><Radio type="radio" name="offset" />正交</RadioLabel>
              <RadioLabel><Radio type="radio" name="offset" />极坐标</RadioLabel>
              <Rule $snug />
              <Field>X =<Spin><SpinInput aria-label="X" defaultValue="0" /><SpinArrows /></Spin>mm</Field>
              <Field>Y =<Spin><SpinInput aria-label="Y" defaultValue="0" /><SpinArrows /></Spin>mm</Field>
            </EditTools>
            <CanvasPane><Drawing /></CanvasPane>
            <EditorFoot><DynButton>动态输入</DynButton></EditorFoot>
          </EditorPage>
          <EditorStatus>
            <span>坐标 (X: -1009 Y: 1</span>
            <span>请选择下一点</span>
          </EditorStatus>
        </Editor>
      </Workspace>

      <StatusBar>
        <StatusCell $w={148} />
        <StatusCell $w={78}><Sun>层高:4.5m</Sun></StatusCell>
        <StatusCell $w={98}><Sun>底标高:-0.03m</Sun></StatusCell>
        <StatusCell $w={48}><Sun>0</Sun></StatusCell>
        <StatusCell>名称在当前层当前构件类型下不允许重名</StatusCell>
      </StatusBar>

      <Taskbar>
        <Start aria-label="开始">
          <svg width="16" height="16" viewBox="0 0 16 16" fill="#fff"><path d="M0 2.200 7 1.200V7.500H0zM8 1 16 0v7.500H8zM0 8.500h7v6.300l-7-1zM8 8.500h8V16l-8-1z" /></svg>
        </Start>
        <TaskSearch>
          <svg width="23" height="23" viewBox="0 0 23 23" fill="none"><circle cx="11.500" cy="11.500" r="9" stroke="#fff" strokeWidth="2.500" /></svg>
          <TaskInput placeholder="在这里输入你要搜索的内容" />
          <svg width="12" height="17" viewBox="0 0 12 17" fill="none" stroke="#aaa"><rect x="3.500" y=".5" width="5" height="10" rx="1" /><path d="M.5 7v6.500h11V7M6 13.500v3M3 16.500h6" /></svg>
        </TaskSearch>
        <Apps>
          {taskApps.map(([name, icon, open, on]) => (
            <TaskApp key={name} aria-label={name} $open={open} $on={on}>{icon}</TaskApp>
          ))}
        </Apps>
        <Tray>
          <Usage>28%<br />CPU使用</Usage>
          <svg width="12" height="8" viewBox="0 0 12 8" fill="none" stroke="#fff" strokeWidth="1.400"><path d="m.5 7 5.500-5.500L11.500 7" /></svg>
          <svg width="16" height="12" viewBox="0 0 16 12" fill="none" stroke="#fff"><path d="M4.500 3.500h10v7H3M15.500 5.500v3M1.500 0v2M4.500 0v2M.5 2.500h5V5l-2 1.500h-1L.5 5zM3 6.500v4" /><path d="M7 5.500h6v3H5z" fill="#fff" /></svg>
          <svg width="13" height="13" viewBox="0 0 13 13" fill="none" stroke="#fff"><path d="M1 12C1 6 6 1 12 1M4 12c0-4 4-8 8-8M7 12c0-3 2-5 5-5" /><circle cx="11" cy="11" r="1.500" fill="#fff" /></svg>
          <svg width="16" height="14" viewBox="0 0 16 14" fill="none" stroke="#fff"><path d="M.5 5h3l4-4v12l-4-4h-3zM9.500 5c1 1 1 3 0 4M11.500 3c2 2 2 6 0 8" /><path d="M13.500 1c3 3 3 9 0 12" stroke="#777" /></svg>
          <span>中</span>
          <SogouMark size={16} />
          <Clock>19:23<br />2017/8/7</Clock>
          <Bell>
            <svg width="17" height="16" viewBox="0 0 17 16"><path d="M0 0h17v12H8l-4 4v-4H0z" fill="#fff" /><path d="M3 3.500h11M3 6.500h11M3 9.500h6" stroke="#111" /></svg>
            <Count>10</Count>
          </Bell>
        </Tray>
      </Taskbar>

      <Speed>
        <Ball>75%</Ball>
        <Pill>
          <svg width="6" height="26" viewBox="0 0 6 26" fill="none" strokeWidth="1.600"><path d="M3 8V1M.5 3.500 3 1l2.500 2.500" stroke="#e85a3c" /><path d="M3 17v7M.5 21.500 3 24l2.500-2.500" stroke="#1c9a4a" /></svg>
          <Rates>0K/s<br />0K/s</Rates>
          <svg width="20" height="20" viewBox="0 0 20 20"><circle cx="9" cy="11" r="8" fill="#2b7bdc" stroke="#9ab" /><path d="M9 7v8M5 11h8" stroke="#fff" strokeWidth="2" /><circle cx="15.500" cy="4" r="4" fill="#d8322c" /></svg>
        </Pill>
      </Speed>

      <ImeBar>
        <ImeLogo><SogouMark size={28} /></ImeLogo>
        <span>中</span>
        <svg width="12" height="12" viewBox="0 0 12 12" fill="none" stroke="#1c74cc" strokeWidth="1.500"><circle cx="2.500" cy="3" r="1.800" /><path d="M9.500 5.500v2c0 2-1 3-2 3.500" strokeWidth="2.500" /></svg>
        <svg width="12" height="16" viewBox="0 0 12 16" fill="none" stroke="#1c74cc" strokeWidth="1.600"><rect x="3.500" y="1" width="5" height="8" rx="2.500" fill="#1c74cc" /><path d="M1 7c0 6 10 6 10 0M6 12v3M3 15h6" /></svg>
        <svg width="16" height="12" viewBox="0 0 16 12"><rect width="16" height="12" rx="1" fill="#1c74cc" /><path d="M2 3h12M2 6h12" stroke="#fff" strokeWidth="1.500" strokeDasharray="1.500 1" /><path d="M4 9h8" stroke="#fff" strokeWidth="1.500" /></svg>
        <svg width="16" height="16" viewBox="0 0 16 16" fill="#b8c2d4"><circle cx="6" cy="4" r="3" /><path d="M0 14V9c2-2 9-2 11 0v5z" /><path d="M6.500 9.500h9v6h-9z" fill="#fff" stroke="#b8c2d4" /><path d="M8.500 11v3M11 11v3h2.500v-1.500H11" fill="none" stroke="#9aa8c0" /></svg>
        <svg width="14" height="14" viewBox="0 0 14 14" fill="#1c74cc"><path d="M4 0c1 2 5 2 6 0l4 3-1.500 3L11 5.500V14H3V5.500L1.500 6 0 3z" /></svg>
        <svg width="14" height="14" viewBox="0 0 14 14" fill="none" stroke="#1c74cc"><path d="M1 13 8 6" strokeWidth="3" /><path d="M10 1C6.500 2 7 7 10 7s4-2 3.500-3.500L10.500 4.500z" fill="#1c74cc" /></svg>
      </ImeBar>

      <Dialog role="dialog" aria-label="定义网格">
        <DialogTitle>
          定义网格
          <BareButton aria-label="关闭"><svg width="11" height="11" viewBox="0 0 11 11" stroke="#111" fill="none" strokeWidth="1.200"><path d="m.5.5 10 10M10.500.5l-10 10" /></svg></BareButton>
        </DialogTitle>
        <DialogForm onSubmit={(e) => e.preventDefault()}>
          <Group>
            <legend><label htmlFor="gh"><Sun>水平方向间距(mm)=&gt;间距*个数,间距,间距*个数,间距,...</Sun></label></legend>
            <Area id="gh" ref={first} defaultValue="100,200" spellCheck={false} />
          </Group>
          <Group>
            <legend><label htmlFor="gv"><Sun>垂直方向间距(mm)=&gt;间距*个数,间距,间距*个数,间距,...</Sun></label></legend>
            <Area id="gv" defaultValue="100,1050,150" spellCheck={false} />
          </Group>
          <Actions>
            <DialogButton type="submit">确定</DialogButton>
            <DialogButton type="button">取消</DialogButton>
          </Actions>
        </DialogForm>
      </Dialog>
    </Shell>
  );
}
